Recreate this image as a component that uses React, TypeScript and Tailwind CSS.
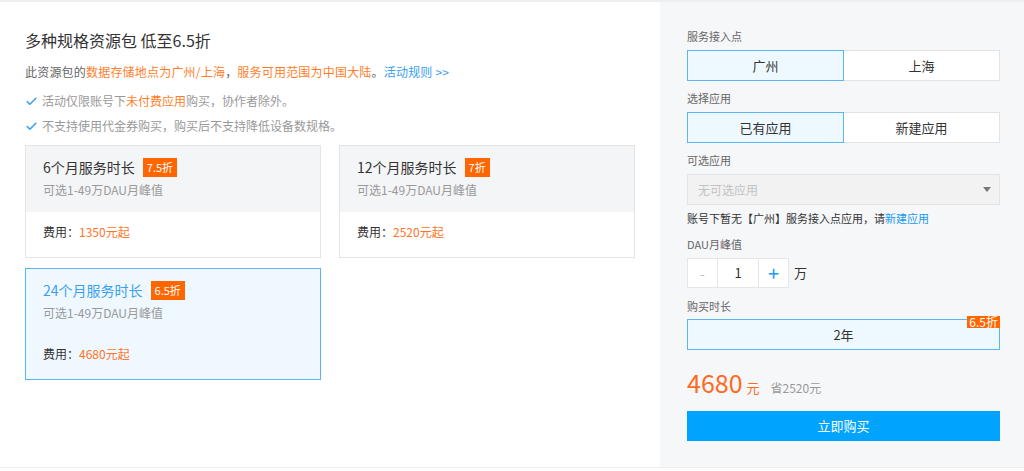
import { Check } from 'lucide-react';

const font = { fontFamily: '"Noto Sans CJK SC", "Liberation Sans", sans-serif' };

interface Plan {
    title: string;
    badge: string;
    price: string;
    active?: boolean;
}

const plans: Plan[] = [
    { title: '6个月服务时长', badge: '7.5折', price: '1350元起' },
    { title: '12个月服务时长', badge: '7折', price: '2520元起' },
    { title: '24个月服务时长', badge: '6.5折', price: '4680元起', active: true },
];

function PlanCard({ plan }: { plan: Plan }) {
    return (
        <div
            className={
                plan.active
                    ? 'h-[112px] border border-[#5ab6f2] bg-[#eff8ff]'
                    : 'h-[113px] border border-[#e4e4e4] bg-white'
            }
        >
            <div className={plan.active ? 'px-[17px] pt-[10px] pb-[13px]' : 'bg-[#f4f5f7] px-[17px] pt-[10px] pb-[13px]'}>
                <div className="flex items-center h-[22px]">
                    <span className={plan.active ? 'text-[14px] text-[#3b9ff0]' : 'text-[14px] text-[#333]'}>
                        {plan.title}
                    </span>
                    <span className="ml-[8px] px-[4px] h-[19px] leading-[19px] bg-[#ff6600] text-white text-[11px]">
                        {plan.badge}
                    </span>
                </div>
                <div className="mt-[3px] text-[12px] leading-[18px] text-[#999]">可选1-49万DAU月峰值</div>
            </div>
            <div className={plan.active ? 'px-[17px] pt-[9px] text-[12px] leading-[20px]' : 'px-[17px] pt-[10px] text-[12px] leading-[20px]'}>
                <span className="text-[#333]">费用：</span>
                <span className="text-[#ff7428]">{plan.price}</span>
            </div>
        </div>
    );
}

function Label({ text, className }: { text: string; className: string }) {
    return <div className={'text-[11px] leading-[16px] text-[#666] ' + className}>{text}</div>;
}

function Toggle({ left, right, className }: { left: string; right: string; className: string }) {
    return (
        <div className={'flex h-[31px] text-[13px] text-[#333] ' + className}>
            <div className="flex-1 flex items-center justify-center border border-[#5ab6f2] bg-[#eef8ff]">{left}</div>
            <div className="flex-1 flex items-center justify-center border border-l-0 border-[#e3e3e3] bg-white">{right}</div>
        </div>
    );
}

export default function App() {
    return (
        <div style={font} className="w-[1024px] h-[471px] bg-white">
            <div className="flex h-[468px] border-t-2 border-b border-[#eeeeee]">
                {/* Left: plan list */}
                <div className="w-[660px] bg-white pl-[25px] pr-[25px] pt-[26px]">
                    <h1 className="text-[16px] leading-[24px] text-[#333]">多种规格资源包 低至6.5折</h1>
                    <p className="mt-[10px] text-[12px] leading-[20px] text-[#666] tracking-[0.2px]">
                        此资源包的<span className="text-[#ff7e29]">数据存储地点为广州/上海</span>，
                        <span className="text-[#ff7e29]">服务可用范围为中国大陆</span>。
                        <span className="text-[#3ba0f0]">活动规则 &gt;&gt;</span>
                    </p>
                    <div className="mt-[9px] flex items-center text-[12px] leading-[20px] text-[#999]">
                        <Check className="w-[13px] h-[13px] text-[#3ba0f0] mr-[4px]" strokeWidth={3} />
                        <span>
                            活动仅限账号下<span className="text-[#ff7e29]">未付费应用</span>购买，协作者除外。
                        </span>
                    </div>
                    <div className="mt-[5px] flex items-center text-[12px] leading-[20px] text-[#999]">
                        <Check className="w-[13px] h-[13px] text-[#3ba0f0] mr-[4px]" strokeWidth={3} />
                        <span>不支持使用代金券购买，购买后不支持降低设备数规格。</span>
                    </div>
                    <div className="mt-[9px] grid grid-cols-[296px_296px] gap-x-[18px] gap-y-[10px]">
                        {plans.map(p => (
                            <PlanCard key={p.title} plan={p} />
                        ))}
                    </div>
                </div>

                {/* Right: purchase form */}
                <div className="w-[364px] bg-[#f6f7f9] pl-[27px] pr-[24px] pt-[26px] flex flex-col">
                    <Label text="服务接入点" className="" />
                    <Toggle left="广州" right="上海" className="mt-[6px]" />
                    <Label text="选择应用" className="mt-[9px]" />
                    <Toggle left="已有应用" right="新建应用" className="mt-[6px]" />
                    <Label text="可选应用" className="mt-[9px]" />
                    <div className="mt-[6px] h-[31px] flex items-center justify-between border border-[#e3e3e3] bg-[#f2f2f2] pl-[10px] pr-[8px]">
                        <span className="text-[12px] text-[#c2c2c2]">无可选应用</span>
                        <span className="w-0 h-0 border-l-[4px] border-r-[4px] border-t-[5px] border-l-transparent border-r-transparent border-t-[#777]" />
                    </div>
                    <div className="mt-[5px] text-[11px] leading-[16px] text-[#333]">
                        账号下暂无【广州】服务接入点应用，请<span className="text-[#1a9af0]">新建应用</span>
                    </div>
                    <Label text="DAU月峰值" className="mt-[10px]" />
                    <div className="mt-[6px] flex items-center h-[30px]">
                        <div className="w-[31px] h-[30px] flex items-center justify-center border border-[#e6e6e6] bg-white text-[14px] text-[#bbb]">-</div>
                        <div className="w-[41px] h-[30px] flex items-center justify-center border border-l-0 border-[#e6e6e6] bg-white text-[13px] text-[#333]">1</div>
                        <div className="w-[30px] h-[30px] flex items-center justify-center border border-l-0 border-[#e6e6e6] bg-white text-[20px] text-[#1a9af0]">+</div>
                        <span className="ml-[5px] text-[13px] text-[#333]">万</span>
                    </div>
                    <Label text="购买时长" className="mt-[10px]" />
                    <div className="relative mt-[5px] h-[31px] flex items-center justify-center border border-[#5ab6f2] bg-[#eef8ff] text-[13px] text-[#333]">
                        2年
                        <span className="absolute -top-[4px] -right-[1px] px-[2px] h-[12px] leading-[12px] bg-[#ff6600] text-white text-[12px]">
                            6.5折
                        </span>
                    </div>
                    <div className="mt-[16px] flex items-baseline h-[32px]">
                        <span className="text-[25px] leading-[32px] text-[#ff6a1f]">4680</span>
                        <span className="ml-[4px] text-[13px] text-[#ff6a1f]">元</span>
                        <span className="ml-[11px] text-[12px] text-[#999]">省2520元</span>
                    </div>
                    <button className="mt-[13px] h-[30px] bg-[#00a4ff] text-white text-[13px]">立即购买</button>
                </div>
            </div>
        </div>
    );
}
